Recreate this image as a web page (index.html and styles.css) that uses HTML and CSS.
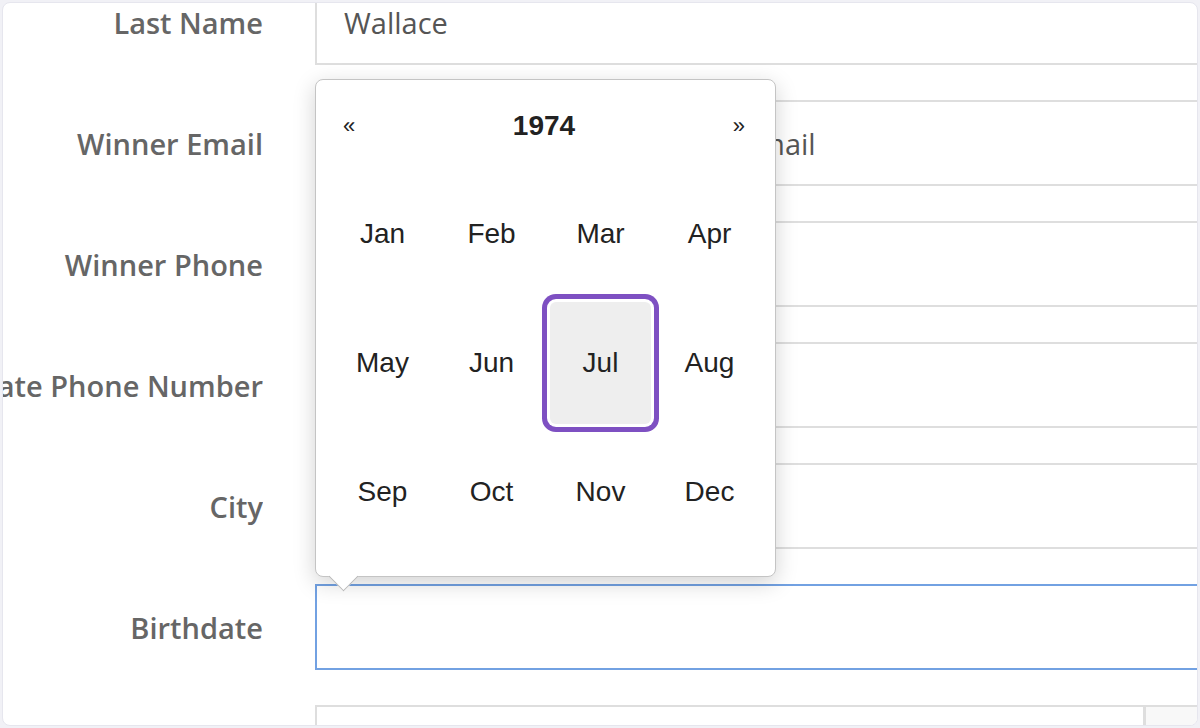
FILE: index.html
```html
<!DOCTYPE html>
<html>
<head>
<meta charset="utf-8">
<link rel="stylesheet" href="styles.css">
</head>
<body>
<div class="card">
  <div class="form">
    <div class="row first">
      <label class="label">Last Name</label>
      <div class="input"><span class="value">Wallace</span></div>
    </div>
    <div class="row">
      <label class="label">Winner Email</label>
      <div class="input"><span class="value">Please enter the winner's full email</span></div>
    </div>
    <div class="row">
      <label class="label">Winner Phone</label>
      <div class="input"></div>
    </div>
    <div class="row">
      <label class="label">Alternate Phone Number</label>
      <div class="input"></div>
    </div>
    <div class="row">
      <label class="label">City</label>
      <div class="input"></div>
    </div>
    <div class="row">
      <label class="label">Birthdate</label>
      <div class="input focus"></div>
    </div>
    <div class="row">
      <label class="label"></label>
      <div class="input group"><div class="addon"></div></div>
    </div>
  </div>

  <div class="picker">
    <div class="picker-head">
      <span class="nav">&laquo;</span>
      <span class="year">1974</span>
      <span class="nav">&raquo;</span>
    </div>
    <div class="months">
      <div class="month">Jan</div>
      <div class="month">Feb</div>
      <div class="month">Mar</div>
      <div class="month">Apr</div>
      <div class="month">May</div>
      <div class="month">Jun</div>
      <div class="month selected">Jul</div>
      <div class="month">Aug</div>
      <div class="month">Sep</div>
      <div class="month">Oct</div>
      <div class="month">Nov</div>
      <div class="month">Dec</div>
    </div>
  </div>
</div>
</body>
</html>
```

FILE: styles.css
```css
* { box-sizing: border-box; }

html, body {
  margin: 0;
  padding: 0;
  background: #f1f1f6;
  height: 100%;
}

body {
  padding: 2px;
  font-family: "Open Sans", "Liberation Sans", sans-serif;
}

.card {
  position: relative;
  width: 1196px;
  height: 724px;
  background: #ffffff;
  border: 1px solid #e6e6ee;
  border-radius: 8px;
  overflow: hidden;
}

.form {
  display: flex;
  flex-direction: column;
  gap: 35px;
  margin-top: -24px;
}

.row {
  display: flex;
  align-items: center;
  gap: 52px;
  height: 86px;
  flex: none;
}

.label {
  flex: none;
  width: 260px;
  text-align: right;
  white-space: nowrap;
  overflow: hidden;
  direction: rtl;
  font-size: 29px;
  font-weight: 600;
  color: #666666;
}

.input {
  flex: none;
  width: 940px;
  height: 86px;
  border: 2px solid #dedede;
  display: flex;
  align-items: center;
  padding-left: 27px;
  font-size: 29px;
  color: #555555;
}

.input.focus {
  border-color: #72a1e2;
}

.input.group {
  justify-content: flex-end;
  padding-left: 0;
}

.addon {
  width: 110px;
  height: 100%;
  border-left: 3px solid #dedede;
  background: #f8f8f8;
}

.value { white-space: nowrap; }

.picker {
  position: absolute;
  left: 312px;
  top: 76px;
  width: 461px;
  height: 498px;
  background: #ffffff;
  border: 1px solid #c4c4c4;
  border-radius: 8px;
  box-shadow: 0 6px 22px rgba(0, 0, 0, 0.18);
  padding: 15px 16px 0 15px;
  font-family: "Liberation Sans", Arial, sans-serif;
  color: #222222;
}

.picker::after {
  content: "";
  position: absolute;
  left: 17px;
  bottom: -11px;
  width: 20px;
  height: 20px;
  background: #ffffff;
  border-right: 1px solid #b8b8b8;
  border-bottom: 1px solid #b8b8b8;
  transform: rotate(45deg);
}

.picker-head {
  display: flex;
  justify-content: space-between;
  align-items: center;
  height: 62px;
  padding: 0 10px 0 8px;
  margin-bottom: 16px;
}

.nav {
  font-size: 22px;
  width: 20px;
  text-align: center;
}

.year {
  font-size: 28px;
  font-weight: bold;
}

.months {
  display: grid;
  grid-template-columns: repeat(4, 101px);
  grid-auto-rows: 122px;
  column-gap: 8px;
  row-gap: 7px;
  padding-left: 1px;
}

.month {
  display: flex;
  align-items: center;
  justify-content: center;
  font-size: 28px;
  border-radius: 6px;
}

.month.selected {
  background: #eeeeee;
  box-shadow: 0 0 0 3px #ffffff, 0 0 0 8px #7e50c2;
}
```
